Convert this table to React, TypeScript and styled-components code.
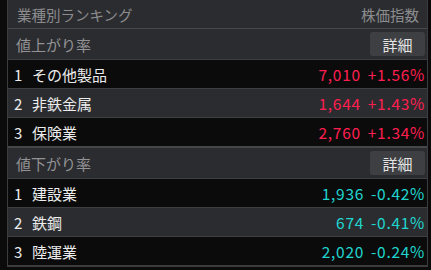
import React from "react";
import styled, { createGlobalStyle } from "styled-components";

const GlobalStyle = createGlobalStyle`
  html, body {
    margin: 0;
    padding: 0;
    background: #0b0b0b;
  }
  body {
    font-family: "Noto Sans CJK JP", "Liberation Sans", sans-serif;
  }
`;

const Panel = styled.div`
  width: 419px;
  margin-left: 7px;
  border-left: 1px solid #3c3c3e;
  border-right: 1px solid #3c3c3e;
  border-bottom: 2px solid #3c3c3e;
  background: #0b0b0b;
`;

const Header = styled.div`
  height: 28px;
  display: flex;
  align-items: center;
  justify-content: space-between;
  padding: 0 8px 0 9px;
  background: #2b2c30;
  border-bottom: 1px solid #48494c;
  color: #8c8c8e;
  font-size: 14.5px;
`;

const Section = styled.div<{ $first?: boolean }>`
  border-top: ${({ $first }) => ($first ? "none" : "2px solid #46474a")};
`;

const SubHeader = styled.div`
  height: 30px;
  display: flex;
  align-items: center;
  justify-content: space-between;
  padding: 0 2px 0 8px;
  background: #2b2c30;
  color: #939395;
  font-size: 15px;
`;

const DetailButton = styled.button`
  width: 55px;
  height: 24px;
  border: none;
  border-radius: 3px;
  background: #3e3f42;
  color: #e4e4e4;
  font-family: inherit;
  font-size: 15px;
  padding: 0;
  cursor: pointer;
`;

const Row = styled.div<{ $alt: boolean }>`
  height: 28px;
  display: flex;
  align-items: center;
  padding: 0 2px 0 6px;
  border-top: 1px solid #3e3f42;
  background: ${({ $alt }) => ($alt ? "#2b2c30" : "#0b0b0b")};
  font-size: 15px;
  color: #ececec;
`;

const Rank = styled.span`
  width: 18px;
`;

const Name = styled.span`
  flex: 1;
`;

const Value = styled.span<{ $up: boolean }>`
  display: flex;
  gap: 7px;
  color: ${({ $up }) => ($up ? "#ff1e50" : "#1fd6cf")};
  font-size: 15.5px;
  letter-spacing: 0.7px;
`;

type Item = { name: string; price: string; change: string };

const up: Item[] = [
  { name: "その他製品", price: "7,010", change: "+1.56%" },
  { name: "非鉄金属", price: "1,644", change: "+1.43%" },
  { name: "保険業", price: "2,760", change: "+1.34%" },
];

const down: Item[] = [
  { name: "建設業", price: "1,936", change: "-0.42%" },
  { name: "鉄鋼", price: "674", change: "-0.41%" },
  { name: "陸運業", price: "2,020", change: "-0.24%" },
];

const RankSection: React.FC<{ title: string; items: Item[]; isUp: boolean; first?: boolean }> = ({
  title,
  items,
  isUp,
  first,
}) => (
  <Section $first={first}>
    <SubHeader>
      <span>{title}</span>
      <DetailButton>詳細</DetailButton>
    </SubHeader>
    {items.map((it, i) => (
      <Row key={it.name} $alt={i % 2 === 1}>
        <Rank>{i + 1}</Rank>
        <Name>{it.name}</Name>
        <Value $up={isUp}>
          <span>{it.price}</span>
          <span>{it.change}</span>
        </Value>
      </Row>
    ))}
  </Section>
);

export default function App() {
  return (
    <>
      <GlobalStyle />
      <Panel>
        <Header>
          <span>業種別ランキング</span>
          <span>株価指数</span>
        </Header>
        <RankSection title="値上がり率" items={up} isUp first />
        <RankSection title="値下がり率" items={down} isUp={false} />
      </Panel>
    </>
  );
}
